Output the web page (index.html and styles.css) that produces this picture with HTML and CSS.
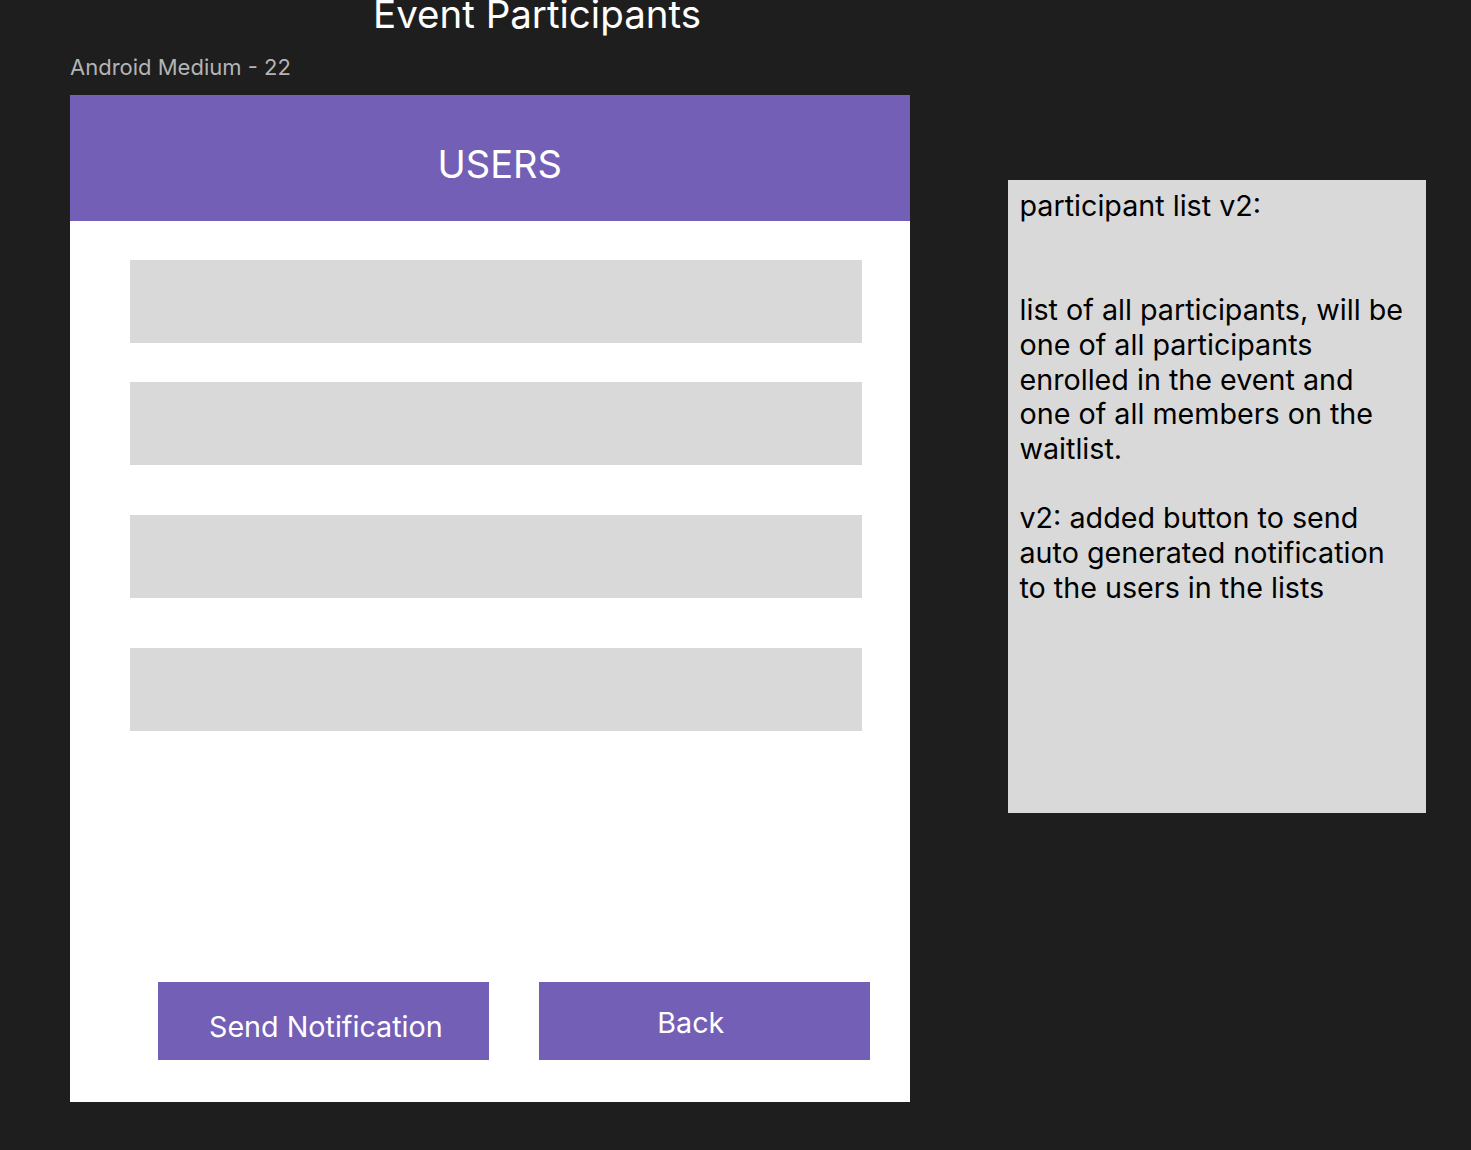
FILE: index.html
```html
<!DOCTYPE html>
<html lang="en">
<head>
<meta charset="utf-8">
<title>Event Participants</title>
<link rel="stylesheet" href="styles.css">
</head>
<body>
  <h1 class="title">Event Participants</h1>
  <div class="canvas">
    <div class="frame-col">
      <div class="frame-label">Android Medium - 22</div>
      <div class="frame">
        <div class="frame-header">USERS</div>
        <div class="frame-body">
          <div class="list">
            <div class="row row-first"></div>
            <div class="row row-second"></div>
            <div class="row row-third"></div>
            <div class="row row-fourth"></div>
          </div>
          <div class="actions">
            <div class="btn btn-send">Send Notification</div>
            <div class="btn btn-back">Back</div>
          </div>
        </div>
      </div>
    </div>
    <div class="note">
      <p class="note-line">participant list v2:</p>
      <p class="note-line">&nbsp;</p>
      <p class="note-line">&nbsp;</p>
      <p class="note-line">list of all participants, will be</p>
      <p class="note-line">one of all participants</p>
      <p class="note-line">enrolled in the event and</p>
      <p class="note-line">one of all members on the</p>
      <p class="note-line">waitlist.</p>
      <p class="note-line">&nbsp;</p>
      <p class="note-line">v2: added button to send</p>
      <p class="note-line">auto generated notification</p>
      <p class="note-line">to the users in the lists</p>
    </div>
  </div>
</body>
</html>
```
FILE: styles.css
```css
html, body {
  margin: 0;
  padding: 0;
  background: #1e1e1e;
  height: 1150px;
  overflow: hidden;
}

body {
  font-family: "Inter", "Noto Sans", sans-serif;
}

.title {
  margin: -5.5px 0 0 373px;
  font-size: 38.5px;
  line-height: 38.5px;
  height: 38.5px;
  font-weight: 400;
  color: #ffffff;
  white-space: nowrap;
}

.canvas {
  display: flex;
  align-items: flex-start;
  gap: 98px;
  padding-left: 70px;
  margin-top: 23px;
}

.frame-col {
  display: flex;
  flex-direction: column;
}

.frame-label {
  font-size: 22px;
  line-height: 22px;
  height: 22px;
  color: #b4b4b4;
  white-space: nowrap;
  margin-bottom: 17px;
}

.frame {
  width: 839.5px;
  height: 1006.7px;
  background: #ffffff;
  display: flex;
  flex-direction: column;
}

.frame-header {
  height: 125.5px;
  box-sizing: border-box;
  padding: 46px 0 0 20px;
  background: #735fb5;
  color: #ffffff;
  font-size: 38px;
  line-height: 46px;
  text-align: center;
}

.frame-body {
  flex: 1;
  display: flex;
  flex-direction: column;
  justify-content: space-between;
  padding: 39.5px 0 41.7px 0;
}

.list {
  display: flex;
  flex-direction: column;
  padding-left: 60px;
}

.row {
  width: 731.7px;
  height: 82.7px;
  background: #d9d9d9;
}

.row-second { margin-top: 39.3px; }
.row-third { margin-top: 50.3px; }
.row-fourth { margin-top: 50.3px; }

.actions {
  display: flex;
  gap: 50.3px;
  padding-left: 88px;
}

.btn {
  width: 330.7px;
  height: 78px;
  box-sizing: border-box;
  background: #735fb5;
  color: #ffffff;
  font-size: 28.7px;
  line-height: 34.7px;
  text-align: center;
  white-space: nowrap;
}

.btn-send {
  padding: 27.5px 0 0 5px;
}

.btn-back {
  padding: 23.5px 27px 0 0;
}

.note {
  margin-top: 124px;
  width: 418px;
  height: 633px;
  box-sizing: border-box;
  padding: 9px 0 0 12px;
  background: #d9d9d9;
  color: #000000;
}

.note-line {
  margin: 0;
  font-size: 28.7px;
  line-height: 34.7px;
  white-space: nowrap;
}
```
